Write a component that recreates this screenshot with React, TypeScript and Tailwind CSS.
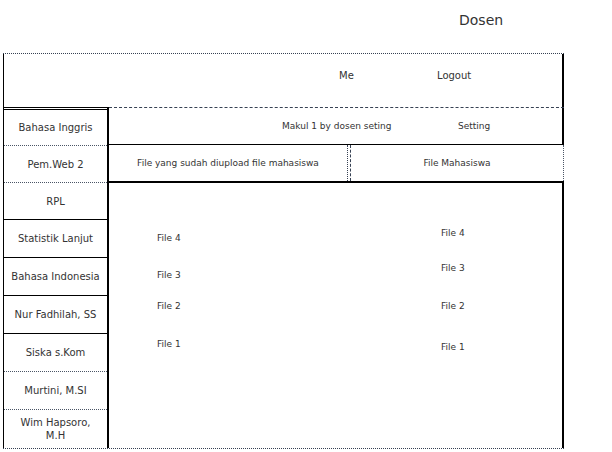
import React from "react";

const sidebar = [
  { label: "Bahasa Inggris", h: "h-[38px]", sep: "double", tw: "" },
  { label: "Pem.Web 2", h: "h-[37px]", sep: "dotted", tw: "" },
  { label: "RPL", h: "h-[37px]", sep: "dotted", tw: "" },
  { label: "Statistik Lanjut", h: "h-[38px]", sep: "solid", tw: "" },
  { label: "Bahasa Indonesia", h: "h-[38px]", sep: "solid", tw: "" },
  { label: "Nur Fadhilah, SS", h: "h-[38px]", sep: "solid", tw: "" },
  { label: "Siska s.Kom", h: "h-[38px]", sep: "solid", tw: "" },
  { label: "Murtini, M.SI", h: "h-[38px]", sep: "dotted", tw: "" },
  { label: "Wim Hapsoro, M.H", h: "h-[39px]", sep: "dotted", tw: "max-w-[84px]" },
];

function Sep({ kind }: { kind: string }) {
  if (kind === "dotted") return <div className="h-0 border-t border-dotted border-gray-600" />;
  if (kind === "double")
    return <div className="h-[3px] border-t border-b border-solid border-black" />;
  return <div className="h-0 border-t border-solid border-black" />;
}

export default function App() {
  return (
    <div
      className="w-[612px] h-[452px] bg-white text-[#333] overflow-hidden"
      style={{ fontFamily: '"DejaVu Sans", Verdana, sans-serif' }}
    >
      <div className="h-[53px] pt-[12px] pl-[459px] text-[14px] leading-[16px]">Dosen</div>
      <div className="ml-[3px] w-[561px]">
        {/* header */}
        <div className="h-0 border-t border-dotted border-gray-700" />
        <div className="h-[53px] border-l border-r-2 border-solid border-black flex items-start pt-[16px] text-[10px] leading-[12px]">
          <span className="ml-[335px] w-[98px]">Me</span>
          <span>Logout</span>
        </div>
        <div className="flex h-[341px]">
          {/* sidebar */}
          <div className="w-[106px] flex flex-col border-l border-r-2 border-solid border-black">
            {sidebar.map((s) => (
              <div key={s.label} className={`${s.h} flex flex-col`}>
                <Sep kind={s.sep} />
                <div className="flex-1 flex items-center justify-center text-center text-[10px] leading-[13px]">
                  <span className={s.tw}>{s.label}</span>
                </div>
              </div>
            ))}
          </div>
          {/* right */}
          <div className="flex-1 flex flex-col">
            <div className="h-0 border-t border-dashed border-gray-700" />
            <div className="h-[37px] border-b border-r-2 border-solid border-black flex items-center text-[9px] leading-[11px]">
              <span className="ml-[173px] w-[176px]">Makul 1 by dosen seting</span>
              <span>Setting</span>
            </div>
            <div className="h-[38px] flex text-[9px] leading-[11px] border-b-2 border-solid border-black">
              <div className="w-[238px] flex items-center justify-center">
                File yang sudah diupload file mahasiswa
              </div>
              <div className="w-0 border-l border-dotted border-gray-700" />
              <div className="w-[2px]" />
              <div className="w-0 border-l border-dashed border-gray-700" />
              <div className="flex-1 flex items-center justify-center">File Mahasiswa</div>
              <div className="w-0 border-l border-dotted border-gray-600" />
            </div>
            <div className="flex-1 flex text-[9px] leading-[10px] border-r-2 border-solid border-black">
              <div className="w-[332px] pl-[48px] flex flex-col pt-[50px]">
                <span>File 4</span>
                <span className="mt-[27px]">File 3</span>
                <span className="mt-[21px]">File 2</span>
                <span className="mt-[28px]">File 1</span>
              </div>
              <div className="flex flex-col pt-[45px]">
                <span>File 4</span>
                <span className="mt-[25px]">File 3</span>
                <span className="mt-[28px]">File 2</span>
                <span className="mt-[31px]">File 1</span>
              </div>
            </div>
          </div>
        </div>
        <div className="h-0 border-t border-dotted border-gray-700" />
      </div>
    </div>
  );
}
